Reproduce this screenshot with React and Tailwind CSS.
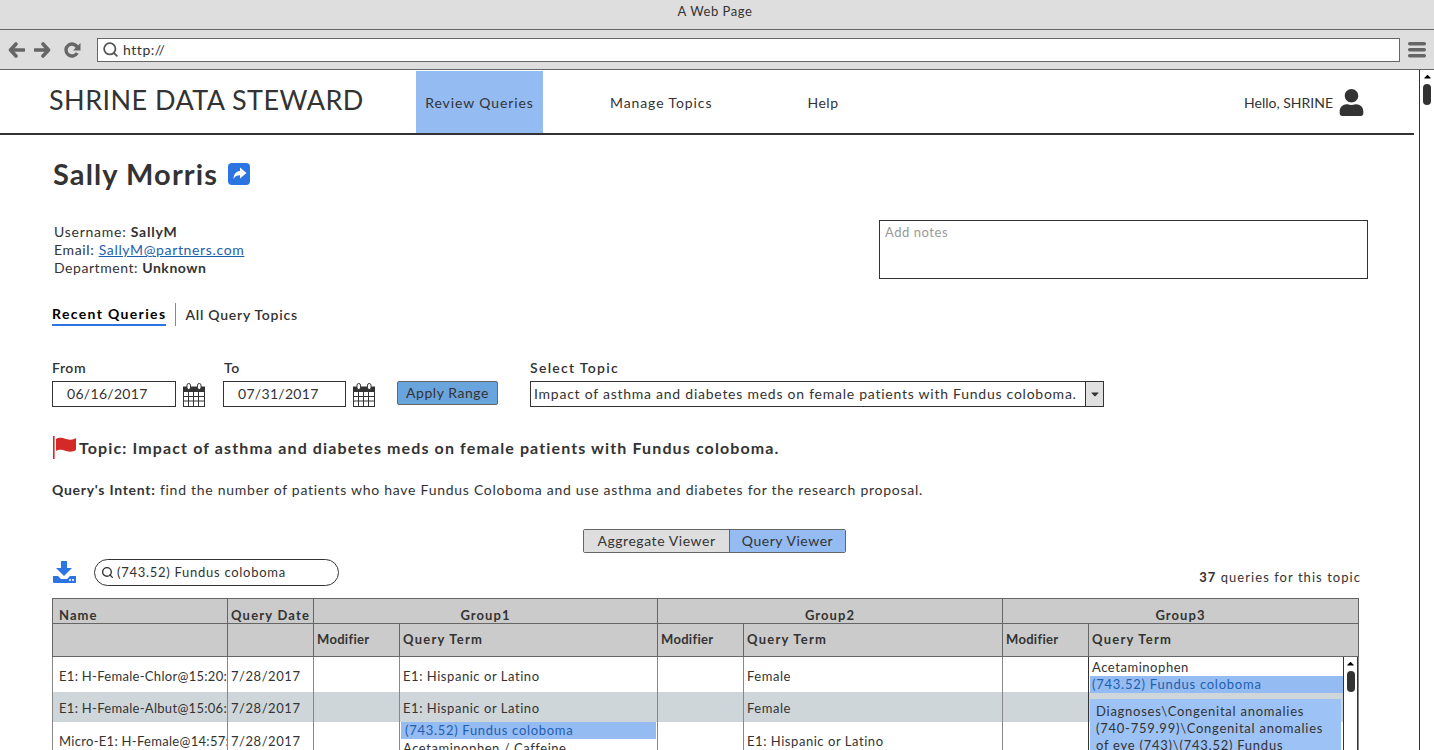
import React from "react";
import { Search } from "lucide-react";
import { FaUser, FaCaretDown, FaCaretUp } from "react-icons/fa";

const rows = [
  { name: "E1: H-Female-Chlor@15:20:", date: "7/28/2017", term1: "E1: Hispanic or Latino", term2: "Female", h: "h-[35px]" },
  { name: "E1: H-Female-Albut@15:06:", date: "7/28/2017", term1: "E1: Hispanic or Latino", term2: "Female", h: "h-[30px]", gray: true },
  { name: "Micro-E1: H-Female@14:57:", date: "7/28/2017", term2: "E1: Hispanic or Latino", h: "h-[36px]", list: true },
];

const Calendar = () => (
  <svg width="22" height="24" viewBox="0 0 22 24" className="shrink-0">
    <rect x="0.5" y="4" width="21" height="19.5" fill="#fff" stroke="#333" />
    <rect x="0.5" y="4" width="21" height="5" fill="#333" />
    <rect x="4" y="0.5" width="3.5" height="6" rx="1.7" fill="#fff" stroke="#333" />
    <rect x="14.5" y="0.5" width="3.5" height="6" rx="1.7" fill="#fff" stroke="#333" />
    <path d="M5.5 9v14M10.5 9v14M15.5 9v14M1 13.5h20M1 18h20" stroke="#333" strokeWidth="1" />
  </svg>
);

const Download = () => (
  <svg width="23" height="22" viewBox="0 0 23 22">
    <path d="M8 0h6v7h5l-8 8-8-8h5z" fill="#2b74e2" />
    <path d="M0 15h5l3 3h6l3-3h6v6a1 1 0 0 1-1 1H1a1 1 0 0 1-1-1z" fill="#2b74e2" />
    <circle cx="17" cy="19" r="1" fill="#fff" />
    <circle cx="20" cy="19" r="1" fill="#fff" />
  </svg>
);

const ShareBox = () => (
  <svg width="22" height="22" viewBox="0 0 22 22">
    <rect width="22" height="22" rx="4" fill="#2b74e2" />
    <path d="M12 4.5l6.5 5.5-6.5 5.5v-3.3c-3.2 0-5 .9-6.5 3.8 0-4.6 2.2-7.6 6.5-8.1z" fill="#fff" />
  </svg>
);

const RedFlag = () => (
  <svg width="25" height="24" viewBox="0 0 25 24" className="shrink-0">
    <rect x="0" y="0" width="1.6" height="23" fill="#d32a27" />
    <path d="M3 3c4-2 6-1 10 0s7 1 10-1v12c-3 2-6 2-10 1s-6-2-10 0z" fill="#d32a27" />
  </svg>
);

const BackArrow = ({ flip }) => (
  <svg width="17" height="16" viewBox="0 0 17 16" className={flip ? "-scale-x-100" : ""}>
    <path d="M8 2L2.5 8 8 14M3 8h13" fill="none" stroke="#666" strokeWidth="3.6" strokeLinecap="round" strokeLinejoin="round" />
  </svg>
);

const Reload = () => (
  <svg width="17" height="16" viewBox="0 0 17 16">
    <path d="M13.2 11a6 6 0 1 1 .2-5.5" fill="none" stroke="#666" strokeWidth="3.4" />
    <path d="M16.5 1v7.5H9z" fill="#666" />
  </svg>
);

const Burger = () => (
  <svg width="18" height="16" viewBox="0 0 18 16">
    <rect y="0" width="18" height="3.4" rx="1.6" fill="#666" />
    <rect y="6" width="18" height="3.4" rx="1.6" fill="#666" />
    <rect y="12" width="18" height="3.4" rx="1.6" fill="#666" />
  </svg>
);

const Th = ({ className = "text-left tracking-[1.25px] px-[3px]", children, ...rest }) => (
  <th {...rest} className={`border border-[#666] bg-[#cbcbcb] text-[13px] font-bold whitespace-nowrap text-[#333] ${className}`}>{children}</th>
);

const Td = ({ className = "px-[3px] pt-[4px]", children }) => (
  <td className={`border-x border-[#888] text-[13px] whitespace-nowrap overflow-hidden text-[#333] ${className}`}>{children}</td>
);

export default function App() {
  return (
    <div className="h-[750px] w-[1434px] overflow-hidden bg-white font-['Lato','Noto_Sans',sans-serif] tracking-[0.55px] text-[#333]">
      {/* browser chrome */}
      <div className="flex h-[30px] items-center justify-center border-b border-[#666] bg-[#dedede] pb-[5px] pr-[4px] text-[13px]">A Web Page</div>
      <div className="flex h-[40px] items-center border-b border-[#666] bg-[#dedede] pl-[8px] pr-[8px]">
        <BackArrow />
        <div className="ml-[9px]"><BackArrow flip /></div>
        <div className="ml-[13px]"><Reload /></div>
        <div className="ml-[16px] flex h-[24px] w-[1303px] items-center border border-[#666] bg-white pl-[4px] text-[14px]">
          <Search size={17} strokeWidth={2.5} className="text-[#555]" />
          <span className="ml-[4px]">http://</span>
        </div>
        <div className="ml-[8px]"><Burger /></div>
      </div>

      <div className="flex h-[680px]">
        <div className="w-[1420px] border-r border-[#333]">
          {/* app header */}
          <div className="mr-[5px] flex h-[65px] border-b-2 border-[#333] pt-px">
            <div className="ml-[49px] w-[367px] pt-[11px] text-[27px] leading-[36px] tracking-[0.45px]">SHRINE DATA STEWARD</div>
            <div className="flex h-[62px] w-[127px] items-center justify-center bg-[#94bbf2] text-[14px] tracking-[0.9px]">Review Queries</div>
            <div className="ml-[67px] flex h-[62px] items-center text-[14px] tracking-[0.9px]">Manage Topics</div>
            <div className="ml-[95px] flex h-[62px] items-center text-[14px]">Help</div>
            <div className="ml-auto mr-[49px] flex h-[62px] items-center text-[14px] tracking-normal">
              Hello, SHRINE
              <FaUser size={27} className="ml-[5px] text-[#333]" />
            </div>
          </div>

          <div className="pl-[52px] pr-[52px]">
            <div className="mt-[21px] flex h-[36px] items-center text-[29px] font-bold tracking-[1.1px]">
              <span className="ml-px">Sally Morris</span>
              <div className="ml-[10px]"><ShareBox /></div>
            </div>

            <div className="mt-[28px] flex justify-between">
              <div className="ml-[2px] pt-[3px] text-[14px] leading-[18px] tracking-[0.75px]">
                <div>Username: <b>SallyM</b></div>
                <div className="tracking-[0.65px]">Email: <a className="text-[#1f5fae] underline">SallyM@partners.com</a></div>
                <div className="tracking-[0.55px]">Department: <b>Unknown</b></div>
              </div>
              <div className="ml-auto -mr-px h-[59px] w-[489px] border border-[#333] px-[5px] py-[2px] text-[13px] text-[#999]">Add notes</div>
            </div>

            <div className="mt-[24px] flex h-[23px] items-center text-[14px]">
              <div className="border-b-2 border-[#2b74e2] font-bold tracking-[1.35px] text-black">Recent Queries</div>
              <div className="mx-[9px] h-[23px] w-px bg-[#888]" />
              <div className="pb-px font-semibold tracking-[0.75px]">All Query Topics</div>
            </div>

            <div className="mt-[31px] flex items-end">
              <div>
                <div className="mb-[3px] text-[14px] font-semibold">From</div>
                <div className="flex h-[26px] w-[124px] items-center border border-[#333] pb-px pl-[14px] text-[14px] tracking-[0.3px]">06/16/2017</div>
              </div>
              <div className="ml-[7px]"><Calendar /></div>
              <div className="ml-[18px]">
                <div className="mb-[3px] pl-px text-[14px] font-semibold">To</div>
                <div className="flex h-[26px] w-[123px] items-center border border-[#333] pb-px pl-[14px] text-[14px] tracking-[0.3px]">07/31/2017</div>
              </div>
              <div className="ml-[7px]"><Calendar /></div>
              <div className="ml-[22px] mb-[2px] flex h-[24px] w-[101px] items-center justify-center rounded-[2px] border border-[#666] bg-[#6aa4dc] pb-px text-[14px]">Apply Range</div>
              <div className="ml-[32px]">
                <div className="mb-[3px] text-[14px] font-semibold tracking-[1.3px]">Select Topic</div>
                <div className="flex h-[26px] w-[574px] items-center border border-[#333] pl-[3px] text-[14px] tracking-[0.75px]">
                  <span className="mb-px flex-1 whitespace-nowrap">Impact of asthma and diabetes meds on female patients with Fundus coloboma.</span>
                  <div className="flex h-full w-[18px] items-center justify-center border-l border-[#333] bg-[#e0e0e0]">
                    <FaCaretDown size={12} />
                  </div>
                </div>
              </div>
            </div>

            <div className="mt-[28px] flex h-[26px] items-center text-[16px] font-bold tracking-[1.12px]">
              <div className="ml-px"><RedFlag /></div>
              <span className="ml-px">Topic: Impact of asthma and diabetes meds on female patients with Fundus coloboma.</span>
            </div>

            <div className="mt-[20px] text-[14px] leading-[18px] tracking-[0.73px]">
              <b>Query's Intent:</b> find the number of patients who have Fundus Coloboma and use asthma and diabetes for the research proposal.
            </div>

            <div className="mt-[30px] flex justify-center pl-[10px]">
              <div className="flex h-[24px] w-[263px] overflow-hidden rounded-[2px] border border-[#666] text-[14px]">
                <div className="flex w-[146px] items-center justify-center border-r border-[#666] bg-[#dedede] pb-[2px]">Aggregate Viewer</div>
                <div className="flex flex-1 items-center justify-center bg-[#94bbf2] pb-[2px]">Query Viewer</div>
              </div>
            </div>

            <div className="mt-[5px] flex h-[28px] items-center">
              <div className="ml-px"><Download /></div>
              <div className="ml-[18px] flex h-[27px] w-[245px] items-center rounded-full border border-[#333] pl-[6px] text-[13px] tracking-[0.72px]">
                <Search size={13} strokeWidth={2.5} />
                <span className="ml-[3px] pt-[2px]">(743.52) Fundus coloboma</span>
              </div>
              <div className="ml-auto mr-[6px] mt-[12px] text-[13px] tracking-[1.05px]"><b>37</b> queries for this topic</div>
            </div>

            <div className="relative mt-[12px]">
              <table className="w-[1306px] table-fixed border-collapse">
                <colgroup>
                  <col className="w-[175px]" />
                  <col className="w-[86px]" />
                  <col className="w-[86px]" />
                  <col className="w-[258px]" />
                  <col className="w-[86px]" />
                  <col className="w-[259px]" />
                  <col className="w-[86px]" />
                  <col className="w-[270px]" />
                </colgroup>
                <thead>
                  <tr className="h-[25px]">
                    <Th className="pt-[8px] pl-[6px] text-left leading-[16px] tracking-[1.05px]">Name</Th>
                    <Th className="pt-[8px] pl-[3px] text-left leading-[16px] tracking-[1.2px]">Query Date</Th>
                    <Th colSpan={2} className="pt-[8px] text-center leading-[16px] tracking-[1.05px]">Group1</Th>
                    <Th colSpan={2} className="pt-[8px] text-center leading-[16px] tracking-[1.05px]">Group2</Th>
                    <Th colSpan={2} className="pt-[8px] text-center leading-[16px] tracking-[1.05px]">Group3</Th>
                  </tr>
                  <tr className="h-[33px]">
                    <Th />
                    <Th />
                    <Th className="px-[3px] text-left tracking-[0.3px]">Modifier</Th>
                    <Th>Query Term</Th>
                    <Th className="px-[3px] text-left tracking-[0.3px]">Modifier</Th>
                    <Th>Query Term</Th>
                    <Th className="px-[3px] text-left tracking-[0.3px]">Modifier</Th>
                    <Th>Query Term</Th>
                  </tr>
                </thead>
                <tbody>
                  {rows.map((r, i) => (
                    <tr key={i} className={`${r.h} ${r.gray ? "bg-[#cfd6da]" : ""}`}>
                      <Td className="pl-[6px] pt-[4px] tracking-[0.3px]">{r.name}</Td>
                      <Td>{r.date}</Td>
                      <Td />
                      {r.list ? (
                        <Td className="align-top">
                          <div className="mx-px bg-[#94bbf2] pl-[4px] leading-[17px] tracking-[0.7px] text-[#1f5fae]">(743.52) Fundus coloboma</div>
                          <div className="px-[3px] pt-[1px] leading-[16px]">Acetaminophen / Caffeine</div>
                        </Td>
                      ) : (
                        <Td>{r.term1}</Td>
                      )}
                      <Td />
                      <Td>{r.term2}</Td>
                      <Td />
                      <Td />
                    </tr>
                  ))}
                </tbody>
              </table>

              {/* group3 term list sits over the rows */}
              <div className="absolute left-[1036px] top-[59px] flex h-[120px] w-[270px] border-x border-[#333] text-[13px] leading-[17px]">
                <div className="w-[254px] pt-[2px]">
                  <div className="bg-white pl-[3px]">Acetaminophen</div>
                  <div className="ml-px bg-[#94bbf2] pl-[2px] tracking-[0.75px] text-[#1f5fae]">(743.52) Fundus coloboma</div>
                  <div className="ml-px mr-[2px] mt-[6px] bg-[#9dc2f5] pl-[6px] pr-[8px] py-[4px] tracking-[0.75px]">
                    Diagnoses\Congenital anomalies (740-759.99)\Congenital anomalies of eye (743)\(743.52) Fundus coloboma
                  </div>
                </div>
                <div className="flex w-[14px] flex-col items-center border-l border-[#333] bg-white">
                  <FaCaretUp size={11} className="mt-px text-black" />
                  <div className="mt-[2px] h-[21px] w-[8px] rounded-full bg-[#333]" />
                </div>
              </div>
            </div>
          </div>
        </div>

        {/* page scrollbar */}
        <div className="flex flex-1 flex-col items-center">
          <FaCaretUp size={11} className="mt-px text-black" />
          <div className="mt-[2px] h-[21px] w-[8px] rounded-full bg-[#333]" />
        </div>
      </div>
    </div>
  );
}
